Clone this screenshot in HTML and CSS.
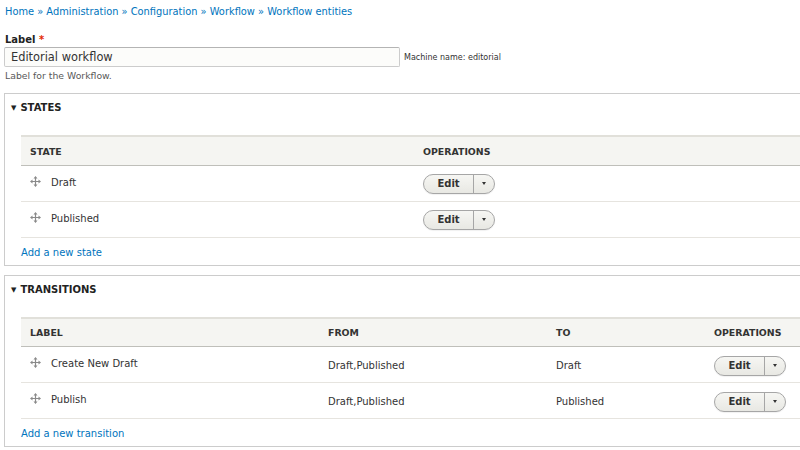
FILE: index.html
```html
<!DOCTYPE html>
<html>
<head>
<meta charset="utf-8">
<link rel="stylesheet" href="styles.css">
</head>
<body>
<div class="page">
  <nav class="breadcrumb">
    <a href="#">Home</a> » <a href="#">Administration</a> » <a href="#">Configuration</a> » <a href="#">Workflow</a> » <a href="#">Workflow entities</a>
  </nav>

  <div class="form-item">
    <label class="label">Label <span class="req">*</span></label>
    <div class="input-row">
      <div class="input">Editorial workflow</div>
      <span class="machine">Machine name: editorial</span>
    </div>
    <div class="desc">Label for the Workflow.</div>
  </div>

  <section class="fieldset states">
    <div class="legend"><span class="tri">▼</span>STATES</div>
    <div class="fs-body">
      <table class="tbl">
        <thead>
          <tr><th class="c-state">STATE</th><th>OPERATIONS</th></tr>
        </thead>
        <tbody>
          <tr><td class="c-state"><div class="cell up"><span class="drag"><svg width="11" height="11" viewBox="0 0 11 11"><path d="M5.5 0 L7.5 2.5 H6.1 V4.9 H8.5 V3.5 L11 5.5 L8.5 7.5 V6.1 H6.1 V8.5 H7.5 L5.5 11 L3.5 8.5 H4.9 V6.1 H2.5 V7.5 L0 5.5 L2.5 3.5 V4.9 H4.9 V2.5 H3.5 Z" fill="#8a8a8a"/></svg></span>Draft</div></td><td><div class="cell"><span class="btn"><span class="btn-main">Edit</span><span class="btn-drop"><span class="caret"></span></span></span></div></td></tr>
          <tr><td class="c-state"><div class="cell up"><span class="drag"><svg width="11" height="11" viewBox="0 0 11 11"><path d="M5.5 0 L7.5 2.5 H6.1 V4.9 H8.5 V3.5 L11 5.5 L8.5 7.5 V6.1 H6.1 V8.5 H7.5 L5.5 11 L3.5 8.5 H4.9 V6.1 H2.5 V7.5 L0 5.5 L2.5 3.5 V4.9 H4.9 V2.5 H3.5 Z" fill="#8a8a8a"/></svg></span>Published</div></td><td><div class="cell"><span class="btn"><span class="btn-main">Edit</span><span class="btn-drop"><span class="caret"></span></span></span></div></td></tr>
        </tbody>
      </table>
      <a class="add" href="#">Add a new state</a>
    </div>
  </section>

  <section class="fieldset transitions">
    <div class="legend"><span class="tri">▼</span>TRANSITIONS</div>
    <div class="fs-body">
      <table class="tbl">
        <thead>
          <tr><th class="c-label">LABEL</th><th class="c-from">FROM</th><th class="c-to">TO</th><th>OPERATIONS</th></tr>
        </thead>
        <tbody>
          <tr><td class="c-label"><div class="cell up"><span class="drag"><svg width="11" height="11" viewBox="0 0 11 11"><path d="M5.5 0 L7.5 2.5 H6.1 V4.9 H8.5 V3.5 L11 5.5 L8.5 7.5 V6.1 H6.1 V8.5 H7.5 L5.5 11 L3.5 8.5 H4.9 V6.1 H2.5 V7.5 L0 5.5 L2.5 3.5 V4.9 H4.9 V2.5 H3.5 Z" fill="#8a8a8a"/></svg></span>Create New Draft</div></td><td class="c-from"><div class="cell down">Draft,Published</div></td><td class="c-to"><div class="cell down">Draft</div></td><td><div class="cell down"><span class="btn"><span class="btn-main">Edit</span><span class="btn-drop"><span class="caret"></span></span></span></div></td></tr>
          <tr><td class="c-label"><div class="cell up"><span class="drag"><svg width="11" height="11" viewBox="0 0 11 11"><path d="M5.5 0 L7.5 2.5 H6.1 V4.9 H8.5 V3.5 L11 5.5 L8.5 7.5 V6.1 H6.1 V8.5 H7.5 L5.5 11 L3.5 8.5 H4.9 V6.1 H2.5 V7.5 L0 5.5 L2.5 3.5 V4.9 H4.9 V2.5 H3.5 Z" fill="#8a8a8a"/></svg></span>Publish</div></td><td class="c-from"><div class="cell down">Draft,Published</div></td><td class="c-to"><div class="cell down">Published</div></td><td><div class="cell down"><span class="btn"><span class="btn-main">Edit</span><span class="btn-drop"><span class="caret"></span></span></span></div></td></tr>
        </tbody>
      </table>
      <a class="add" href="#">Add a new transition</a>
    </div>
  </section>
</div>
</body>
</html>
```

FILE: styles.css
```css
html, body {
  margin: 0;
  padding: 0;
  overflow: hidden;
  background: #fff;
}
body {
  font-family: "DejaVu Sans", "Open Sans", sans-serif;
  font-size: 10px;
  color: #333;
  width: 800px;
  height: 450px;
}
a { color: #0074bd; text-decoration: none; }

.page {
  padding: 5px 0 0 4px;
  width: 960px;
}

.breadcrumb {
  padding-left: 1px;
  height: 14px;
  line-height: 14px;
  font-size: 9.85px;
  color: #0074bd;
}

.form-item { margin-top: 14px; }
.label {
  display: block;
  font-weight: bold;
  padding-left: 1px;
  line-height: 14px;
  color: #222;
}
.req { color: #e32700; }
.input-row {
  display: flex;
  align-items: center;
}
.input {
  box-sizing: border-box;
  width: 396px;
  height: 20px;
  border: 1px solid #ccc;
  border-top-color: #b4b4b4;
  border-radius: 2px;
  background: #fcfcfa;
  padding: 0 6px;
  line-height: 18px;
  font-size: 11.4px;
  color: #333;
}
.machine {
  margin-left: 4px;
  font-size: 8px;
  color: #333;
}
.desc {
  margin-top: 3px;
  padding-left: 1px;
  font-size: 9.3px;
  line-height: 12px;
  color: #595959;
}

.fieldset {
  border: 1px solid #ccc;
  background: #fff;
  box-sizing: border-box;
  width: 940px;
}
.states { margin-top: 11px; }
.transitions { margin-top: 9px; }

.legend {
  font-weight: bold;
  font-size: 10px;
  line-height: 14px;
  padding: 7px 0 0 6px;
  height: 22px;
  box-sizing: border-box;
  color: #222;
}
.tri {
  display: inline-block;
  font-size: 7px;
  margin-right: 4px;
  vertical-align: 1px;
}
.fs-body {
  padding: 19px 0 0 16px;
}

.tbl {
  border-collapse: collapse;
  width: 100%;
}
.tbl th {
  text-align: left;
  font-weight: bold;
  font-size: 9.4px;
  color: #333;
  background: #f5f5f2;
  border-top: 2px solid #e1e0da;
  border-bottom: 1px solid #bfbfba;
  height: 28px;
  padding: 0 9px;
}
.transitions .tbl th { height: 27px; }
.tbl td {
  height: 35px;
  padding: 0 9px;
  border-bottom: 1px solid #e6e4df;
  font-size: 10px;
  vertical-align: middle;
  color: #333;
}
.tbl td .cell.up { margin-bottom: 4px; }
.tbl td .cell.down { margin-top: 2px; }
.c-state { width: 375px; }
.c-label { width: 280px; }
.c-from { width: 210px; }
.c-to { width: 140px; }

.drag {
  display: inline-block;
  width: 11px;
  height: 11px;
  margin-right: 10px;
  vertical-align: -1px;
}
.drag svg { display: block; }

.btn {
  display: inline-flex;
  box-sizing: border-box;
  height: 20px;
  border: 1px solid #a6a6a6;
  border-radius: 10px;
  background: linear-gradient(#f6f6f3, #e8e8e3);
  overflow: hidden;
  vertical-align: middle;
  box-shadow: 0 1px 1px rgba(0,0,0,0.06);
}
.btn-main {
  width: 49px;
  line-height: 18px;
  text-align: center;
  font-weight: bold;
  font-size: 10px;
  color: #333;
  border-right: 1px solid #a6a6a6;
}
.btn-drop {
  width: 20px;
  display: flex;
  align-items: center;
  justify-content: center;
}
.caret {
  width: 0;
  height: 0;
  border-left: 2.5px solid transparent;
  border-right: 2.5px solid transparent;
  border-top: 3px solid #333;
}

.add {
  display: block;
  height: 27px;
  line-height: 29px;
  font-size: 10px;
}
```
